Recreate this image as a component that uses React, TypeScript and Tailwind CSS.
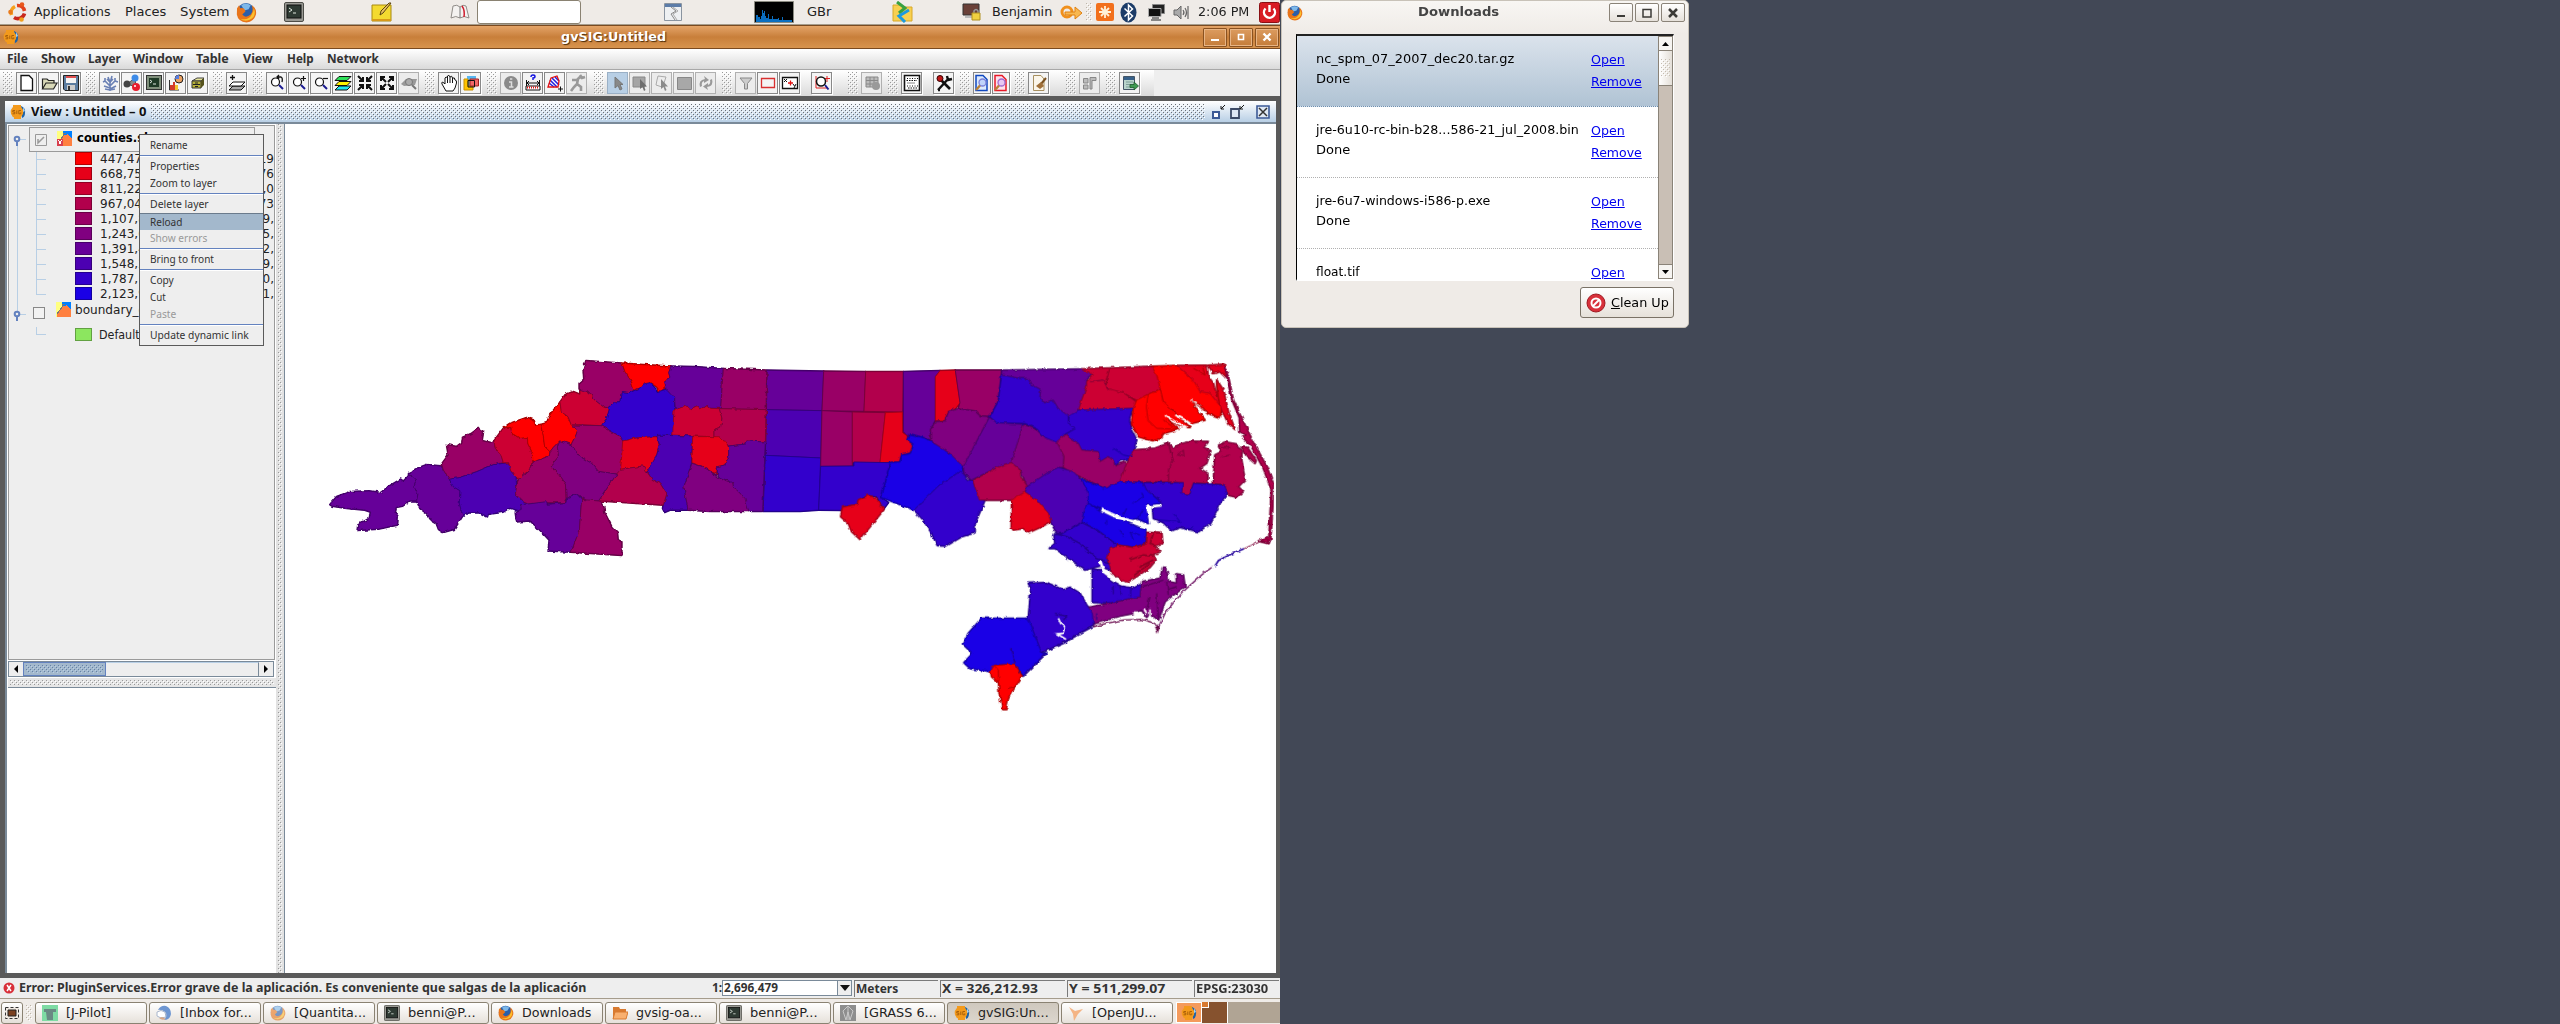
import { ReactNode, useId, useLayoutEffect, useRef, useState } from "react";

/* ---------- helpers ---------- */

/** Single line of text set to an exact advance width. */
function T({ w, className = "", children }: { w: number; className?: string; children: ReactNode }) {
  const ref = useRef<HTMLSpanElement>(null);
  const [k, setK] = useState(1);
  useLayoutEffect(() => {
    if (ref.current && ref.current.offsetWidth) setK(w / ref.current.offsetWidth);
  }, [w]);
  return (
    <span className={"block shrink-0 whitespace-nowrap " + className} style={{ width: w }}>
      <span ref={ref} className="inline-block origin-left" style={{ transform: `scaleX(${k})` }}>
        {children}
      </span>
    </span>
  );
}

function Dots({ a = "#6b6f75", b = "#ffffff", className = "" }: { a?: string; b?: string; className?: string }) {
  const id = useId();
  return (
    <svg className={"block h-full w-full " + className} shapeRendering="crispEdges">
      <pattern id={id} width="4" height="4" patternUnits="userSpaceOnUse">
        <rect width="1" height="1" fill={a} />
        <rect x="2" y="2" width="1" height="1" fill={a} />
        <rect x="1" y="1" width="1" height="1" fill={b} />
        <rect x="3" y="3" width="1" height="1" fill={b} />
      </pattern>
      <rect width="100%" height="100%" fill={`url(#${id})`} />
    </svg>
  );
}

/* ---------- icons ---------- */

const Firefox = ({ s = 20, dim = false }: { s?: number; dim?: boolean }) => (
  <svg width={s} height={s} viewBox="0 0 20 20" className={dim ? "opacity-60" : ""}>
    <circle cx="9.5" cy="9.5" r="8.5" fill="#2b5fa8" />
    <path d="M5 3Q9 0 14 3L12 7L8 8Z" fill="#7db8ea" />
    <path d="M1 6L3 3L4 6Q8 5 9 9L6 12Q9 16 14 12Q17 8 15 3Q20 6 19 12Q17 19 10 19.500Q2 19 .8 12Z" fill="#e8741a" />
    <path d="M17 6Q20 14 13 17Q8 19 4 16Q12 18 15 12Q17 9 17 6Z" fill="#fbc02d" />
  </svg>
);
const Sig = ({ s = 16 }: { s?: number }) => (
  <svg width={s} height={s} viewBox="0 0 16 16">
    <path d="M11 2Q16 4 15 9Q15 13 12 14Z" fill="#1b62a8" />
    <circle cx="7" cy="8" r="6.300" fill="#f39a1c" />
    <path d="M3 1H11V4H3ZM4 13H11V15H4Z" fill="#f39a1c" />
    <path d="M5 6.500H2.800V8H4.800V9.800H2.500M6.800 6.500V10M11 6.500H8.800V9.800H10.800V8.300" fill="none" stroke="#a35a08" strokeWidth=".9" />
    <path d="M13 3L15 7L13 8" fill="#a8d0f0" />
  </svg>
);
const Term = ({ s = 20 }: { s?: number }) => (
  <svg width={s} height={s} viewBox="0 0 20 20">
    <rect x=".5" y=".5" width="19" height="19" rx="1.500" fill="#9a9a94" stroke="#4d4d48" />
    <rect x="3" y="3" width="14" height="13" fill="#2e3a33" stroke="#111" />
    <path d="M5 6L8 8L5 10M9 11H12" stroke="#dfe8df" fill="none" />
  </svg>
);
const LayerIcon = ({ bad = false }: { bad?: boolean }) => (
  <svg width="15" height="15" viewBox="0 0 15 15" shapeRendering="crispEdges">
    <rect width="15" height="15" fill="#ffff80" />
    <path d="M6 0H15V9L11 5L7 4Z" fill="#0080ff" />
    <path d="M1 15V12L6 5L11 3L15 8V15Z" fill="#ff8040" />
    <path d="M1 12L6 5V2L9 2" stroke="#777" fill="none" />
    {bad && <path d="M0 8H6V15H0Z" fill="#d9404f" />}
    {bad && <path d="M1.500 9.500L4.500 13.500M4.500 9.500L1.500 13.500" stroke="#fff" />}
  </svg>
);

const mag = (
  <>
    <circle cx="7.500" cy="8" r="4" fill="#fff" stroke="#111" strokeWidth="1.200" />
    <path d="M11 11L15 15" stroke="#1a1a90" strokeWidth="2" />
  </>
);
const G = "#999";
const toolIcons: Record<string, ReactNode> = {
  new: <path d="M3 1.500H11L14.500 5V16.500H3Z" fill="#fff" stroke="#111" strokeWidth="1.300" />,
  open: <path d="M2.500 15V5H7L8.500 6.500H14V9M2.500 15L6 9H17L13.500 15Z" fill="#d8d8b8" stroke="#222" strokeWidth="1.200" />,
  save: (
    <>
      <path d="M1.500 1.500H16.500V16.500H3L1.500 15Z" fill="#5b7ca0" stroke="#222" />
      <path d="M4 2H14V9H4Z" fill="#f4f4f4" />
      <path d="M4 2H14V4H4Z" fill="#e05050" />
      <path d="M5 11H13V16H5Z" fill="#ccc" />
      <path d="M6 12H8V16H6Z" fill="#333" />
    </>
  ),
  coral: <path d="M9 17V8M9 12L4 7L2 8M4 7V4M9 12L14 7L17 8M14 7V4M9 8L7 3M9 9L11 2M9 14L3 12M9 15L15 12M6 5L9 8L12 5M4 15L9 16L14 15" stroke="#6a80b4" strokeWidth="1.600" fill="none" />,
  balls: (
    <>
      <path d="M4 10L12 4L13 13Z" stroke="#555" fill="#888" />
      <circle cx="4" cy="10" r="3.500" fill="#444" />
      <circle cx="12" cy="4" r="3.500" fill="#3d8be8" />
      <circle cx="13" cy="13" r="4" fill="#e81c2c" />
      <circle cx="12" cy="12" r="1" fill="#fff" />
    </>
  ),
  term: (
    <>
      <rect x="1.500" y="1.500" width="15" height="14" fill="#81907c" stroke="#333" />
      <rect x="4" y="4" width="10" height="9" fill="#1f3a26" />
      <path d="M5 6L7 7.500L5 9M8 10H11" stroke="#dfe8df" fill="none" />
    </>
  ),
  chart: (
    <>
      <circle cx="12" cy="5" r="4" fill="#e8a060" stroke="#222" />
      <path d="M12 5V1A4 4 0 0 0 8 5Z" fill="#5a7fe0" />
      <path d="M2.500 6V16H12" stroke="#333" fill="none" />
      <path d="M3 11H6V16H3ZM6 8H8V16H6Z" fill="#d33a2a" />
      <path d="M8 11H11V16H8Z" fill="#f2c230" />
    </>
  ),
  drawer: (
    <>
      <path d="M3 7L8 4H15L12 7Z" fill="#e6e49a" stroke="#444" />
      <path d="M3 7H12V14H3Z" fill="#b8b23a" stroke="#333" />
      <path d="M12 7L15 4V11L12 14Z" fill="#55521c" />
      <path d="M4 10.500H11" stroke="#222" />
      <path d="M6 9H9M6 12.500H9" stroke="#222" />
    </>
  ),
  addlayer: (
    <>
      <path d="M5 12H17L13 16H1Z" fill="#aaa" stroke="#111" />
      <path d="M5 8H17L13 12H1Z" fill="#fff" stroke="#111" />
      <path d="M2 3.500H7M4.500 1V6" stroke="#111" strokeWidth="1.300" />
    </>
  ),
  zoomback: <>{mag}<path d="M9 3H13Q15 4 14 8M11 1L9 3L11 5" stroke="#111" fill="none" strokeWidth="1.300" /></>,
  zoomin: <>{mag}<path d="M11 4.500H16M13.500 2V7" stroke="#111" strokeWidth="1.200" /></>,
  zoomout: <>{mag}<path d="M11 4.500H16" stroke="#111" strokeWidth="1.200" /></>,
  layers: (
    <>
      <path d="M5 12H17L13 16H1Z" fill="#1ee6f0" stroke="#111" />
      <path d="M5 7.500H17L13 11.500H1Z" fill="#fff200" stroke="#111" />
      <path d="M5 2.500H17L13 6.500H1Z" fill="#2fe05a" stroke="#111" />
    </>
  ),
  shrink: <path d="M2 2L7 7M7 3V7H3M16 2L11 7M11 3V7H15M2 16L7 11M3 11H7V15M16 16L11 11M11 15V11H15" stroke="#111" strokeWidth="2" fill="none" />,
  grow: <path d="M3 3L8 8M3 7V3H7M15 3L10 8M11 3H15V7M3 15L8 10M3 11V15H7M15 15L10 10M15 11V15H11" stroke="#111" strokeWidth="2" fill="none" />,
  zoomgray: (
    <>
      <path d="M1 10L6 5H17L15 11L4 12Z" fill={G} />
      <circle cx="9" cy="8" r="3.500" fill="#aaa" stroke="#777" />
      <path d="M12 11L16 15" stroke="#777" strokeWidth="2" />
    </>
  ),
  hand: (
    <path d="M6 17L2 10Q1 7 4 9L5 10V4Q6 2 7.500 4V2Q9 0 10 3Q12 1 12.500 4Q15 3 15 6Q17 6 16.500 9L15 14L13 17ZM7.500 4V9M10 3V9M12.500 4V9" fill="#fff" stroke="#111" />
  ),
  overlap: (
    <>
      <path d="M5 2H14V12H5Z" fill="#56b6f0" />
      <path d="M2 5V16H11V12L6 12V5Z" fill="#ffc400" stroke="#c89000" />
      <path d="M8 5H16.500V12H8Z" fill="#f06868" stroke="#a02020" />
      <path d="M6 6.500H12.500V13H6Z" fill="none" stroke="#111" />
    </>
  ),
  info: (
    <>
      <circle cx="9" cy="9" r="7" fill="#8a8a8a" />
      <path d="M8 5H10.300M7 8H9.500V13M7 13H11.500" stroke="#ddd" fill="none" strokeWidth="1.500" />
    </>
  ),
  measure: (
    <>
      <path d="M7 3Q7 1 9 1Q11 1 11 2.500Q11 4 9 4V6" stroke="#1010e0" fill="none" strokeWidth="1.400" />
      <path d="M2.500 6V12M15.500 6V12M3 9H15M5 7L3 9L5 11M13 7L15 9L13 11" stroke="#111" fill="none" />
      <path d="M2 12H16V16H2Z" fill="#fff" stroke="#111" />
      <path d="M3 13.500H15" stroke="#e01010" strokeWidth="2" strokeDasharray="1 1" />
    </>
  ),
  area: (
    <>
      <path d="M2 13L5 4L11 2L13 7L12 13Z" fill="#fff" />
      <path d="M3 9L8 13M4 6L11 13M6 4L13 11M9 3L13 7" stroke="#2020e0" strokeWidth="1.600" />
      <path d="M2 13L5 4L11 2L13 7L12 13Z" fill="none" stroke="#e01010" strokeWidth="1.300" />
      <path d="M12 15H17M14.500 12.500V17.500" stroke="#111" />
    </>
  ),
  run: <path d="M12 1L14 4L17 3M13 2L9 6L4 6M10 5L9 10L13 13V17M9 10L6 13L3 17" stroke={G} strokeWidth="2.600" fill="none" />,
  cursor: <path d="M6 3V14L9 11.500L11 16L13 15L11 10.500H14Z" fill="#888" stroke="#777" />,
  rectsel: (
    <>
      <path d="M2 3H14V13H2Z" fill="#a5a5a5" stroke="#888" />
      <path d="M9 5V15L11.500 13L13 17L14.500 16L13 12.500H16Z" fill="#6e6e6e" />
    </>
  ),
  polysel: (
    <>
      <path d="M5 2L13 3L11 9L9 13L3 11L4 6Z" fill="none" stroke="#aaa" />
      <path d="M8 5V15L10.500 13L12 17L13.500 16L12 12.500H15Z" fill="#8a8a8a" />
    </>
  ),
  fillsel: <path d="M2.500 3.500H16.500V15.500H2.500Z" fill="#a8a8a8" stroke="#888" />,
  rotate: <path d="M3 13Q1 6 8 5L7 2L12 6L7 9V7Q4 8 5 12ZM15 5Q17 12 10 13L11 16L6 12.500L11 9V11Q14 10 13 6Z" fill={G} />,
  filter: <path d="M3 4H15L10.500 9.500V15H7.500V9.500Z" fill="#ccc" stroke="#888" />,
  redrect: <path d="M2.500 4.500H15.500V13.500H2.500Z" fill="none" stroke="#d83030" strokeWidth="1.300" />,
  xy: (
    <>
      <path d="M1.500 3.500H16.500V14.500H1.500Z" fill="#fff" stroke="#111" strokeWidth="1.300" />
      <path d="M3 5L6 8M6 5L3 8M12 10L13.500 12M15 10L13 14" stroke="#111" />
      <path d="M7 9H12M9.500 6.500V11.500" stroke="#e01010" strokeWidth="1.300" />
    </>
  ),
  zoomred: (
    <>
      <path d="M3 2V14H14M14 2V8M11 4.500H17" stroke="#e02020" fill="none" />
      <circle cx="8" cy="7.500" r="4.500" fill="#fff" stroke="#111" strokeWidth="1.500" />
      <path d="M12 11L15.500 15.500" stroke="#1a1a90" strokeWidth="2" />
    </>
  ),
  grid: (
    <>
      <path d="M3 3H15V13H3ZM3 6.500H15M3 10H15M7 3V13M11 3V13" fill="#bbb" stroke="#888" />
      <circle cx="13" cy="12" r="4" fill={G} />
    </>
  ),
  noise: (
    <>
      <path d="M1.500 1.500H16.500V16.500H1.500Z" fill="#fff" stroke="#111" strokeWidth="1.600" />
      <g stroke="#111" strokeWidth="1.200">
        <path d="M4 4.500H15M4 12H15" strokeDasharray="1 1.500" />
        <path d="M3.500 6.500H14M5 14H14" strokeDasharray="1.500 1" />
        <path d="M4.500 9H12" strokeDasharray="1 1" />
      </g>
    </>
  ),
  tools: (
    <>
      <path d="M3 16L14 4M3 16L5 16M12 2L13 6L17 5" stroke="#111" strokeWidth="2.400" fill="none" />
      <path d="M6 6L15 15" stroke="#111" strokeWidth="2.600" />
      <circle cx="5" cy="4.500" r="3" fill="#c01818" stroke="#300" />
    </>
  ),
  docblue: (
    <>
      <path d="M3 1.500H10L14 5.500V16.500H3Z" fill="#dceafc" stroke="#1048c0" strokeWidth="1.500" />
      <circle cx="9.500" cy="8.500" r="3.500" fill="#c0d4fa" stroke="#7a80d8" strokeWidth="1.300" />
      <path d="M7 11.500L3 16" stroke="#b88038" strokeWidth="2.300" />
    </>
  ),
  docred: (
    <>
      <path d="M3 1.500H10L14 5.500V16.500H3Z" fill="#fce0ea" stroke="#e81828" strokeWidth="1.500" />
      <circle cx="9.500" cy="8.500" r="3.500" fill="#e6c8f4" stroke="#a06ad0" strokeWidth="1.300" />
      <path d="M7 11.500L3 16" stroke="#b88038" strokeWidth="2.300" />
    </>
  ),
  broom: (
    <>
      <path d="M3.500 1.500H11L14 5V16.500H3.500Z" fill="#fbf6ea" stroke="#a89060" />
      <path d="M16 4L11 10" stroke="#7a5020" strokeWidth="2" />
      <path d="M11 8L14 12L10 15L6 12Z" fill="#a0703a" />
    </>
  ),
  layout: <path d="M2.500 4.500H7V9H2.500ZM2.500 11H7V15H2.500ZM9 3.500H15V6.500H11V15H9Z" fill="#bbb" stroke="#888" />,
  export: (
    <>
      <path d="M2.500 2.500H13.500V15.500H2.500Z" fill="#b9d4cc" stroke="#456" />
      <path d="M3 3H13V6H3Z" fill="#37618a" />
      <path d="M5 8H12M5 10.500H9M5 13H9" stroke="#7f9f98" />
      <path d="M9 10.500H13V8L17.500 12L13 16V13.500H9Z" fill="#3f9a52" stroke="#1d5c2c" strokeWidth=".8" />
    </>
  ),
};

type Btn = { i: string; off?: boolean; on?: boolean; gap?: boolean; narrow?: boolean };
const toolGroups: { w: string; b: Btn[] }[] = [
  { w: "w-[83px]", b: [{ i: "new" }, { i: "open" }, { i: "save" }] },
  { w: "w-[127px]", b: [{ i: "coral" }, { i: "balls" }, { i: "term" }, { i: "chart" }, { i: "drawer" }] },
  { w: "w-[40px]", b: [{ i: "addlayer" }] },
  { w: "w-[172px]", b: [{ i: "zoomback" }, { i: "zoomin" }, { i: "zoomout" }, { i: "layers" }, { i: "shrink" }, { i: "grow" }, { i: "zoomgray", off: true }] },
  { w: "w-[62px]", b: [{ i: "hand" }, { i: "overlap" }] },
  { w: "w-[107px]", b: [{ i: "info", off: true }, { i: "measure" }, { i: "area" }, { i: "run", off: true }] },
  { w: "w-[128px]", b: [{ i: "cursor", on: true }, { i: "rectsel", off: true }, { i: "polysel", off: true }, { i: "fillsel", off: true }, { i: "rotate", off: true }] },
  { w: "w-[126px]", b: [{ i: "filter", off: true }, { i: "redrect" }, { i: "xy" }, { i: "zoomred", gap: true }] },
  { w: "w-[40px]", b: [{ i: "grid", off: true }] },
  { w: "w-[72px]", b: [{ i: "noise" }, { i: "tools", gap: true }] },
  { w: "w-[55px]", b: [{ i: "docblue", narrow: true }, { i: "docred", narrow: true }] },
  { w: "w-[51px]", b: [{ i: "broom" }] },
  { w: "w-[40px]", b: [{ i: "layout", off: true }] },
  { w: "w-[48px]", b: [{ i: "export" }] },
];

/* ---------- map ---------- */

const ramp = ["#ff0000", "#e60019", "#cc0033", "#b2004c", "#990066", "#800080", "#660099", "#4c00b2", "#3300cc", "#1a00e6"];
const edge = ["#a80000", "#9c0018", "#8a0024", "#780036", "#640046", "#540058", "#420068", "#320078", "#22008a", "#12009c"];
type Shape = [number, string];

const west: Shape[] = [
  [6, "60,494 80,470 120,455 180,453 212,458 235,440 272,418 280,424 296,408 310,410 320,420 312,440 324,462 320,482 300,482 278,498 258,502 255,518 264,530 262,555 236,560 205,567 142,571 144,555 178,535 182,516 164,510 110,505 66,498"],
  [6, "296,398 325,384 350,374 392,378 398,385 418,418 430,440 450,452 448,490 458,528 432,568 400,577 386,568 378,548 362,538 350,520 330,505 320,482 324,462 312,440 320,420 310,410 296,408"],
  [4, "395,372 415,345 410,314 440,320 456,308 458,292 485,280 505,266 520,275 516,302 540,308 552,303 556,325 572,342 580,368 550,374 500,395 450,412 418,418 400,390"],
  [7, "418,418 450,412 500,395 550,374 596,368 602,392 618,412 620,440 616,462 640,486 655,492 632,494 634,514 600,504 584,515 534,523 532,530 510,518 470,518 458,528 448,490 450,452 430,440"],
  [2, "552,303 565,285 582,263 602,262 606,280 630,295 652,292 654,312 668,340 668,372 656,392 626,417 618,412 602,392 596,368 580,368 572,342 556,325"],
  [0, "582,263 600,250 650,233 670,240 676,255 692,254 700,290 704,320 720,335 718,348 680,362 668,366 668,340 654,312 652,292 630,295 606,280 602,262"],
  [0, "692,254 712,248 716,230 735,205 750,187 754,215 774,230 784,255 803,270 798,285 783,314 750,302 730,322 720,335 704,320 700,290"],
  [2, "750,187 765,165 790,155 810,163 810,145 840,160 852,178 880,200 898,208 890,235 874,257 815,254 784,255 774,230 754,215"],
  [4, "828,62 880,66 936,70 945,95 962,120 972,150 960,158 934,155 930,185 914,186 894,203 880,200 852,178 840,160 808,147 808,130 822,118 820,90"],
  [0, "936,70 1000,74 1083,79 1076,98 1080,112 1064,122 1068,140 1050,155 1040,140 1020,128 1010,135 1000,132 990,144 972,150 962,120 945,95"],
  [8, "934,155 960,158 990,144 1000,132 1020,128 1045,155 1068,148 1090,165 1094,175 1094,212 1090,285 1040,286 1040,290 985,293 938,303 928,288 905,275 874,257 890,235 898,208 894,203 914,186 930,185"],
  [6, "1083,79 1155,80 1240,86 1232,205 1202,205 1190,195 1170,208 1160,198 1140,208 1128,198 1096,210 1094,175 1068,148 1064,122 1080,112 1076,98"],
  [4, "1240,86 1370,91 1368,209 1232,206"],
  [2, "1092,210 1128,198 1140,208 1160,198 1170,208 1190,195 1202,205 1228,206 1236,235 1232,262 1212,270 1212,290 1150,288 1088,285"],
  [3, "1228,206 1368,209 1366,306 1310,303 1308,312 1256,318 1240,300 1212,290 1212,270 1232,262 1236,235"],
  [4, "784,255 874,257 905,275 928,288 938,303 938,330 932,392 920,402 865,394 845,370 810,350 783,314 798,285 803,270"],
  [1, "938,303 985,293 1044,290 1048,312 1038,350 1020,392 1008,394 1000,378 932,388"],
  [7, "1040,286 1148,288 1144,370 1122,440 1134,510 1080,510 1064,517 1058,505 1060,495 1070,462 1050,430 1026,418 1012,396 1038,350 1048,312"],
  [1, "1148,290 1228,290 1240,300 1256,325 1256,350 1244,375 1222,380 1220,402 1196,390 1172,378 1146,368"],
  [6, "1256,318 1308,312 1310,303 1366,306 1364,346 1358,514 1316,514 1300,470 1270,440 1268,428 1230,412 1222,404 1222,380 1244,375 1256,350"],
  [5, "1146,370 1172,378 1196,390 1222,412 1268,428 1270,440 1305,475 1316,514 1200,514 1134,510 1122,440"],
  [3, "932,388 1000,378 1010,394 1026,418 1050,430 1070,462 1060,495 866,482 920,402"],
  [5, "750,302 783,314 810,350 845,370 865,394 920,402 866,482 832,482 800,462 768,475 766,430 745,400 722,378 745,350 742,320"],
  [4, "730,322 750,302 742,320 745,350 722,378 745,400 766,430 768,475 762,488 710,488 655,492 640,486 616,462 620,440 626,417 656,392 668,372 680,362 718,348 720,335"],
  [6, "655,492 710,485 712,493 768,488 770,475 800,462 815,478 808,570 784,636 715,632 718,600 680,560 660,542 620,545 616,516 634,508 632,494"],
  [4, "815,478 876,484 885,520 905,560 922,578 924,600 935,606 935,646 784,636 808,570"],
];
const middle: Shape[] = [
  [6, "-40,91 131,94 126,212 -42,209"],
  [7, "-42,209 126,212 122,354 -44,346"],
  [8, "-44,346 122,354 116,510 60,514 -52,514"],
  [4, "131,94 257,95 252,214 126,212"],
  [3, "257,95 370,95 368,216 252,214"],
  [6, "370,95 480,92 466,110 466,240 452,270 452,300 400,285 382,288 370,275"],
  [1, "480,92 526,91 540,188 522,212 506,215 495,243 466,243 466,110"],
  [4, "526,91 665,91 655,185 630,230 600,228 585,214 535,206 540,188"],
  [4, "126,212 217,216 217,378 122,379"],
  [3, "217,216 316,218 300,368 217,367"],
  [1, "316,218 367,216 368,278 385,290 384,300 400,312 392,340 365,346 358,366 300,368"],
  [8, "122,379 222,378 222,366 332,368 305,470 308,475 325,488 310,508 290,470 265,467 235,480 232,494 188,500 185,511 116,510"],
];
const east: Shape[] = [
  [9, "392,283 435,295 480,320 520,350 548,378 546,390 475,438 402,510 305,472 332,368 360,366 365,346 392,340 400,312 384,300"],
  [1, "188,502 232,494 235,480 262,467 285,472 312,508 290,535 240,598 215,575 205,550 182,530"],
  [8, "402,510 475,438 546,390 560,418 578,424 600,478 614,482 585,550 585,578 545,590 498,618 472,616 455,580 430,540"],
  [5, "466,245 495,243 506,215 535,206 585,214 600,228 628,230 550,380 510,340 460,308 452,300 452,270"],
  [6, "628,232 650,248 730,253 694,368 664,376 574,420 552,400 550,380"],
  [5, "730,253 770,270 790,290 815,296 830,305 852,348 850,382 835,382 800,400 742,440 722,390 694,368"],
  [3, "578,422 664,376 694,368 718,388 722,408 742,440 735,456 700,480 598,480"],
  [8, "665,105 720,115 745,115 752,132 782,148 780,170 790,188 820,180 835,205 865,225 865,250 888,265 855,282 830,307 790,290 770,265 735,250 650,248 630,230 655,185"],
  [6, "665,91 905,87 940,100 920,115 920,140 905,180 896,210 880,228 865,228 835,205 820,180 790,188 780,170 782,148 752,132 745,115 720,115 665,105"],
  [2, "905,87 990,84 978,120 980,140 1030,158 1068,185 1065,205 896,210 905,180 920,140 920,125 940,105"],
  [2, "990,84 1120,79 1135,110 1142,150 1100,165 1072,182 1030,158 980,145 980,120"],
  [8, "896,210 1056,205 1048,240 1055,270 1070,300 1060,330 1050,355 1020,362 1005,378 1000,362 985,350 960,365 955,335 905,330 895,310 855,284 888,265 865,250 868,228"],
  [4, "855,284 895,310 905,330 955,335 960,365 985,350 1000,362 1005,378 1035,365 1040,370 1020,425 975,445 920,418 880,400 850,382 852,348 830,305"],
  [7, "835,382 880,395 905,420 925,460 925,490 910,520 905,550 880,560 850,582 830,580 812,545 805,520 770,480 735,456 742,440 800,400"],
  [1, "735,456 770,480 805,520 812,545 780,562 745,578 730,565 700,570 694,560 695,480"],
  [0, "1105,162 1142,150 1150,185 1195,230 1230,262 1200,256 1155,225 1170,250 1195,268 1150,280 1145,295 1115,302 1075,290 1055,250 1060,205 1070,180"],
  [0, "1105,162 1142,150 1150,185 1195,230 1230,262 1200,256 1160,235 1195,268 1130,265 1104,240 1099,200"],
  [0, "1115,79 1190,77 1240,120 1290,160 1325,200 1320,232 1285,220 1262,195 1235,180 1250,210 1275,240 1235,250 1195,230 1150,185 1142,150 1130,105"],
  [1, "1190,77 1280,76 1285,110 1300,130 1305,150 1322,200 1290,160 1260,155 1240,120"],
  [1, "1285,76 1333,73 1338,110 1322,95 1300,100"],
  [1, "1310,120 1330,150 1345,215 1365,268 1345,250 1325,210 1312,165"],
  [3, "1333,78 1345,110 1360,180 1378,220 1402,270 1425,315 1460,380 1480,430 1478,500 1472,595 1467,610 1435,603 1467,590 1474,450 1450,385 1412,315 1388,292 1400,285 1380,275 1378,232 1356,180"],
  [3, "1060,330 1125,325 1165,310 1172,340 1180,360 1166,390 1166,425 1020,425 1040,370"],
  [3, "1165,310 1180,325 1200,312 1235,304 1285,305 1270,322 1292,332 1280,370 1258,385 1283,400 1283,430 1240,428 1230,463 1203,460 1208,428 1166,425 1166,390 1180,360"],
  [3, "1316,316 1335,306 1370,312 1385,335 1385,360 1395,420 1375,440 1390,455 1370,472 1345,465 1330,433 1300,430 1305,345 1325,335"],
  [3, "1385,322 1402,322 1428,362 1425,370 1400,348"],
  [9, "905,418 975,445 1020,425 1090,428 1100,450 1145,490 1100,495 1105,550 1070,535 1040,540 1010,525 965,508 925,490 925,460"],
  [8, "1090,428 1208,428 1205,460 1230,463 1240,430 1335,435 1342,460 1320,490 1312,510 1290,550 1255,575 1200,562 1175,572 1150,548 1120,535 1118,505 1145,498 1145,485 1100,450"],
  [9, "925,490 965,515 1010,535 1060,555 1100,570 1098,610 1065,622 1010,615 950,570 905,548 910,520"],
];
const south: Shape[] = [
  [8, "425,162 485,128 530,150 590,195 570,205 562,240 575,272 540,258 495,270 405,205 388,205 405,190 402,165"],
  [2, "590,195 640,203 680,192 682,157 725,160 728,190 700,200 722,215 700,222 708,240 690,262 650,290 620,308 575,280 562,235 570,205"],
  [8, "517,268 545,270 570,300 600,318 640,325 665,312 660,350 570,368 517,367"],
  [5, "505,382 570,370 660,350 665,305 720,295 728,265 740,265 745,305 770,310 768,282 790,285 795,320 760,345 735,365 715,420 690,400 680,412 665,390 640,400 600,408 520,432 515,400"],
  [8, "325,310 380,308 430,330 450,322 480,340 500,375 517,400 520,438 480,460 430,490 365,518 325,415 333,325"],
  [9, "185,415 325,415 345,470 365,518 380,520 345,550 310,588 285,552 225,555 215,575 150,565 132,548 158,520 128,492 145,460"],
  [0, "222,556 285,552 306,588 285,620 265,655 258,688 248,688 238,640 236,608 215,590 212,574"],
];

const Counties = ({ data }: { data: Shape[] }) => (
  <>
    {data.map(([c, p], i) => (
      <polygon key={"u" + i} points={p} fill={edge[c]} stroke={edge[c]} strokeWidth="6" strokeLinejoin="round" />
    ))}
    {data.map(([c, p], i) => (
      <polygon key={i} points={p} fill={ramp[c]} stroke={edge[c]} strokeWidth="2.500" strokeLinejoin="round" />
    ))}
  </>
);

function MapView() {
  return (
    <svg className="block h-full w-full" viewBox="285 124 989 849" preserveAspectRatio="none">
      <defs>
        <filter id="coast" x="-5%" y="-5%" width="110%" height="110%" colorInterpolationFilters="sRGB">
          <feTurbulence type="fractalNoise" baseFrequency="0.2" numOctaves="2" seed="4" result="n" />
          <feDisplacementMap in="SourceGraphic" in2="n" scale="3.5" xChannelSelector="R" yChannelSelector="G" />
        </filter>
      </defs>
      <g transform="translate(780 340) scale(.33333)">
        <Counties data={middle} />
      </g>
      <g filter="url(#coast)">
        <g transform="translate(310 340) scale(.33333)">
          <Counties data={west} />
        </g>
        <g transform="translate(780 340) scale(.33333)">
          <Counties data={east} />
          <path d="M965 509L1010 530L1060 546L1100 561L1150 575" fill="none" stroke="#fff" strokeWidth="10" />
          <path d="M1145 496L1103 500L1112 550" fill="none" stroke="#fff" strokeWidth="8" />
          <path d="M1232 180L1248 190L1262 210L1285 230M1155 226L1185 245L1220 262M1186 225L1215 240L1235 254" fill="none" stroke="#fff" strokeWidth="6" />
          <g fill="none" stroke="#a80000" strokeWidth="3">
            <path d="M1195 225L1170 205M1275 215L1235 182M1180 262L1150 240M1240 85L1275 105L1268 82M1310 130L1318 195" />
            <g stroke="#780036">
              <path d="M1195 345L1210 330L1212 350ZM1325 320H1350L1340 330M1350 345L1325 350M930 125L970 120L985 150" />
            </g>
            <g stroke="#12009c">
              <path d="M980 555V540M1030 590L1020 570M1060 600L1050 575L1080 585M1000 325L1030 345L1055 350M1030 525L1040 505M1075 535L1090 510M1135 540L1200 545L1180 520M1215 570L1240 560M1060 490L1090 470L1085 455" />
            </g>
          </g>
        </g>
        <g transform="translate(920 480) scale(.33333)">
          <Counties data={south} />
          <path d="M540 244L552 275L585 300L620 314L660 300" fill="none" stroke="#fff" strokeWidth="9" />
          <path d="M415 415L422 430L436 440L428 460L412 462L425 470L438 478" fill="none" stroke="#fff" strokeWidth="5" />
          <path d="M640 400H655M672 385L680 405M690 388V410" fill="none" stroke="#fff" strokeWidth="5" />
          <path d="M402 160L440 170L480 190L530 235L570 250M405 400L440 410L430 420M365 518L430 488L480 458L520 438M310 588L345 555L375 522M272 505L285 550" fill="none" stroke="#22008a" strokeWidth="4" />
          <path d="M580 318V340M600 318L605 345M632 325V350M530 420V400" fill="none" stroke="#22008a" strokeWidth="3" />
          <path d="M630 240L670 225L700 228M655 262L700 240M700 160L690 190L720 205M640 288L690 250" fill="none" stroke="#8a0024" strokeWidth="5" />
          <path d="M665 320L700 310L730 300M690 350L680 390M710 340L715 415M740 330L770 320M745 345L740 305" fill="none" stroke="#540058" strokeWidth="4" />
          <path d="M222 556L235 570L236 608M285 620L262 625" fill="none" stroke="#a80000" strokeWidth="3" />
          <path d="M520 440L560 430L610 420L665 418L700 428L718 440" fill="none" stroke="#640046" strokeWidth="4" />
          <path d="M705 440H720L713 462Z" fill="#640046" />
          <path d="M716 440L735 400L760 368L800 325L845 285L875 262" fill="none" stroke="#640058" strokeWidth="4" />
          <path d="M885 258L895 242L930 224L972 206" fill="none" stroke="#22009a" strokeWidth="5" />
          <path d="M972 206L1015 186L1045 178L1046 192L1020 184" fill="#b2004c" stroke="#780036" strokeWidth="3" />
        </g>
      </g>
    </svg>
  );
}

/* ---------- tree panel ---------- */

const legend: [string, string, string, string][] = [
  ["bg-[#ff0000]", "border-[#b20000]", "447,471", ".19"],
  ["bg-[#e60019]", "border-[#a00012]", "668,752", "76"],
  ["bg-[#cc0033]", "border-[#8f0024]", "811,222", "0,0"],
  ["bg-[#b2004c]", "border-[#7c0035]", "967,044", "73"],
  ["bg-[#990066]", "border-[#6b0047]", "1,107,8", "9,"],
  ["bg-[#800080]", "border-[#590059]", "1,243,0", "5,"],
  ["bg-[#660099]", "border-[#47006b]", "1,391,4", "2,"],
  ["bg-[#4c00b2]", "border-[#35007c]", "1,548,2", "9,"],
  ["bg-[#3300cc]", "border-[#24008f]", "1,787,1", "0,"],
  ["bg-[#1a00e6]", "border-[#1200a0]", "2,123,9", "1,"],
];

const menu: (null | { t: string; w: number; off?: boolean; on?: boolean })[] = [
  { t: "Rename", w: 38 },
  null,
  { t: "Properties", w: 49 },
  { t: "Zoom to layer", w: 67 },
  null,
  { t: "Delete layer", w: 59 },
  { t: "Reload", w: 32, on: true },
  { t: "Show errors", w: 57, off: true },
  null,
  { t: "Bring to front", w: 64 },
  null,
  { t: "Copy", w: 24 },
  { t: "Cut", w: 16 },
  { t: "Paste", w: 26, off: true },
  null,
  { t: "Update dynamic link", w: 99 },
];

function ContextMenu() {
  return (
    <div className="absolute left-[131px] top-[9px] z-10 h-[212px] w-[125px] border border-[#5a5a5a] bg-[#eeeeee] pt-[2px] font-['Noto_Sans'] text-[11px] text-[#333]">
      {menu.map((m, i) =>
        m ? (
          <div key={i} className={"flex h-[17px] items-center pl-[10px] " + (m.on ? "border-t border-[#6b7b8c] bg-[#a3b8cc]" : m.off ? "text-[#999]" : "")}>
            <T w={m.w}>{m.t}</T>
          </div>
        ) : (
          <div key={i} className="h-[4px] pt-px">
            <div className="h-[2px] border-b border-white bg-[#6382bf]" />
          </div>
        ),
      )}
    </div>
  );
}

function Tree() {
  return (
    <div className="relative h-[535px] w-[267px] border border-[#9a9a9a] bg-[#eeeeee] font-['DejaVu_Sans'] text-[13px] text-[#222]">
      <svg className="absolute left-0 top-0" width="46" height="230" viewBox="9 126 46 230" fill="none" stroke="#b8cfe5" shapeRendering="crispEdges">
        <path d="M17.500 146V312M19 139.500H26M19 314.500H26M36.500 152V294.500M36.500 327V334.500H46" />
        {legend.map((_, i) => (
          <path key={i} d={`M36 ${159.5 + 15 * i}H46`} />
        ))}
        <g stroke="#6382bf" strokeWidth="2" shapeRendering="auto">
          <circle cx="17" cy="139" r="2.300" />
          <path d="M17 141V146" />
          <circle cx="17" cy="314" r="2.300" />
          <path d="M17 316V321" />
        </g>
      </svg>
      <div className="relative ml-[20px] mt-px flex h-[25px] w-[226px] items-center border border-[#9a9a9a] pl-[5px]">
        <svg width="12" height="12" viewBox="0 0 12 12">
          <path d="M.500 .500H11.500V11.500H.500Z" fill="none" stroke="#999" />
          <path d="M3 5V9L9 3" fill="none" stroke="#999" strokeWidth="1.500" />
        </svg>
        <div className="ml-[10px] -mt-[3px]"><LayerIcon bad /></div>
        <T w={84} className="ml-[5px] -mt-[4px] font-bold text-black">counties.shp</T>
      </div>
      {legend.map(([bg, bd, a, b], i) => (
        <div key={i} className="relative ml-[66px] flex h-[15px] w-[199px] items-center justify-between overflow-hidden text-[12px]">
          <div className="flex items-center">
            <div className={`-mt-[2px] h-[13px] w-[17px] border ${bg} ${bd}`} />
            <span className="ml-[8px] leading-[15px]">{a}</span>
          </div>
          <span className="leading-[15px]">{b}</span>
        </div>
      ))}
      <div className="relative ml-[24px] flex h-[18px] items-center">
        <div className="mt-[4px] h-[12px] w-[12px] border border-[#888] bg-[#f2f2f2]" />
        <div className="ml-[11px] -mt-[4px]"><LayerIcon /></div>
        <T w={105} className="ml-[4px] -mt-[2px]">boundary_county</T>
      </div>
      <div className="relative ml-[66px] mt-[5px] flex h-[20px] items-center">
        <div className="-mt-[2px] h-[13px] w-[17px] border border-[#62a142] bg-[#8ce65f]" />
        <T w={41} className="ml-[7px]">Default</T>
      </div>
    </div>
  );
}

/* ---------- gvSIG window ---------- */

const topMenu: [string, number, string][] = [
  ["File", 21, "w-[34px]"],
  ["Show", 34, "w-[47px]"],
  ["Layer", 33, "w-[45px]"],
  ["Window", 50, "w-[63px]"],
  ["Table", 33, "w-[47px]"],
  ["View", 30, "w-[44px]"],
  ["Help", 27, "w-[40px]"],
  ["Network", 52, "w-[60px]"],
];

const WinBtn = ({ children, light = false }: { children: ReactNode; light?: boolean }) => (
  <div className={"flex h-[19px] w-[24px] items-center justify-center border " + (light ? "rounded-[2px] border-[#8a8378] bg-linear-to-b from-white to-[#e6e1da]" : "rounded-[1px] border-[#8a5220] bg-linear-to-b from-[#dc9c60] to-[#c47c38] shadow-[inset_0_0_0_1px_#e8b484]")}>
    <svg width="12" height="12" viewBox="0 0 12 12" fill="none" stroke={light ? "#3c3b37" : "#fff"} strokeWidth="2">
      {children}
    </svg>
  </div>
);

function TopPanel() {
  return (
    <div className="flex h-[25px] items-center overflow-hidden border-b border-[#a59c8c] bg-[#efebe7] pl-[8px] font-['DejaVu_Sans'] text-[13px] text-[#222]">
      <div className="w-[26px]">
        <svg width="20" height="20" viewBox="0 0 20 20" fill="none" strokeWidth="3.600">
          <path d="M3.500 13A7 7 0 0 1 7 4.500" stroke="#f6a21c" />
          <path d="M9 3.500A7 7 0 0 1 16.500 9" stroke="#e2421c" />
          <path d="M16.500 11.500A7 7 0 0 1 6 15.500" stroke="#c8281c" />
          <g stroke="none">
            <circle cx="2.500" cy="10" r="2.300" fill="#e87a1c" />
            <circle cx="14" cy="2.500" r="2.300" fill="#e8581c" />
            <circle cx="13.500" cy="17.500" r="2.300" fill="#f0a01c" />
          </g>
        </svg>
      </div>
      <div className="w-[91px]"><T w={76}>Applications</T></div>
      <div className="w-[55px]"><T w={41}>Places</T></div>
      <div className="w-[56px]"><T w={49}>System</T></div>
      <div className="w-[48px]"><Firefox s={21} /></div>
      <div className="w-[87px]"><Term /></div>
      <div className="w-[79px]">
        <svg width="22" height="20" viewBox="0 0 22 20">
          <path d="M1 3H20V19H1Z" fill="#f4da30" stroke="#a88a10" />
          <path d="M1 17H20V19H1Z" fill="#d89a18" />
          <path d="M20 1L12 11L9 13L10 9L18 1Z" fill="#e8c060" stroke="#5a4410" />
        </svg>
      </div>
      <div className="w-[27px]">
        <svg width="20" height="16" viewBox="0 0 20 16">
          <path d="M1 14L3 2Q7 0 10 3Q13 0 16 2L19 14Q14 11 10 14Q6 11 1 14Z" fill="#f4f2f0" stroke="#908c88" />
          <path d="M10 3V14" stroke="#777" />
          <path d="M12 2Q15 6 14 13" stroke="#d02030" fill="none" strokeWidth="1.500" />
        </svg>
      </div>
      <div className="w-[187px]"><div className="h-[24px] w-[104px] rounded-[3px] border border-[#8a8272] bg-white" /></div>
      <div className="w-[90px]">
        <svg width="18" height="18" viewBox="0 0 18 18">
          <path d="M.500 .500H17.500V17.500H.500Z" fill="#eef0f2" stroke="#8a94a0" />
          <path d="M1 1H17V4H1Z" fill="#5c7ca8" />
          <path d="M7 4L12 8L7 11L11 17" stroke="#888" fill="none" />
          <path d="M9 4L14 8L9 11L13 17" stroke="#aaa" fill="none" />
        </svg>
      </div>
      <div className="w-[53px]">
        <svg width="40" height="22" viewBox="0 0 40 22">
          <path d="M.500 .500H39.500V21.500H.500Z" fill="#000" stroke="#8a8a80" />
          <path d="M2 21V14H4V16H6V18H7V15H8V9H9V12H10V10H11V15H12V17H14V13H15V18H18V15H19V18H24V17H25V19H28V16H29V19H38V21Z" fill="#0a6ec0" />
        </svg>
      </div>
      <div className="w-[84px]"><T w={24}>GBr</T></div>
      <div className="w-[71px]">
        <svg width="22" height="22" viewBox="0 0 22 22">
          <path d="M2 4H9L11 6H21V20H2Z" fill="#f8d050" stroke="#d8a828" />
          <path d="M6 1L14 7L8 12" stroke="#38a040" strokeWidth="3" fill="none" />
          <path d="M18 9L8 15L14 21" stroke="#1c9ae0" strokeWidth="3" fill="none" />
        </svg>
      </div>
      <div className="w-[30px]">
        <svg width="20" height="20" viewBox="0 0 20 20">
          <path d="M1 2H17V13H1Z" fill="#6a4038" stroke="#333" />
          <path d="M3 14H13V16H3Z" fill="#bbb" />
          <path d="M12 12V9Q14 6 16 9V12" stroke="#999" strokeWidth="1.500" fill="none" />
          <path d="M10 11H18V18H10Z" fill="#f0d040" stroke="#b09020" />
        </svg>
      </div>
      <div className="w-[68px]"><T w={60}>Benjamin</T></div>
      <div className="w-[26px]">
        <svg width="23" height="16" viewBox="0 0 23 16">
          <circle cx="7" cy="8" r="5" fill="none" stroke="#f0901c" strokeWidth="3" />
          <path d="M5 8H15V3L22 9L15 15V11H5Z" fill="#f8b850" stroke="#e08010" />
        </svg>
      </div>
      <div className="h-[18px] w-[10px] pr-[4px]"><Dots a="#bdb5a8" /></div>
      <div className="w-[24px]">
        <svg width="18" height="18" viewBox="0 0 18 18">
          <rect width="18" height="18" rx="2" fill="#f2701c" />
          <path d="M9 3V15M3 9H15M5 5L13 13M13 5L5 13" stroke="#fff2d8" strokeWidth="1.800" />
        </svg>
      </div>
      <div className="w-[28px]">
        <svg width="17" height="21" viewBox="0 0 17 21">
          <ellipse cx="8.500" cy="10.500" rx="8" ry="10" fill="#1c3c68" />
          <path d="M4.500 6.500L12.500 14L8.500 18V3L12.500 7L4.500 14.500" stroke="#fff" strokeWidth="1.500" fill="none" />
        </svg>
      </div>
      <div className="w-[25px]">
        <svg width="17" height="17" viewBox="0 0 17 17">
          <path d="M4.500 .500H16.500V9.500H4.500Z" fill="#222" stroke="#888" />
          <path d="M.500 4.500H13V12.500H.500Z" fill="#111" stroke="#aaa" />
          <path d="M4 14H11M3 16H13" stroke="#666" strokeWidth="1.500" />
        </svg>
      </div>
      <div className="w-[25px]">
        <svg width="17" height="17" viewBox="0 0 17 17" fill="none" stroke="#666">
          <path d="M1 6H4L8 2V15L4 11H1Z" fill="#aaa" />
          <path d="M10 6Q12 8.500 10 11M12 4Q15 8.500 12 13M15 2V15" strokeWidth="1.200" />
        </svg>
      </div>
      <div className="w-[61px]"><T w={51}>2:06 PM</T></div>
      <svg width="21" height="21" viewBox="0 0 21 21" className="shrink-0">
        <rect x=".500" y=".500" width="20" height="20" rx="2" fill="#d81c24" stroke="#8a1014" />
        <path d="M6.500 6.500A5.500 5.500 0 1 0 14.500 6.500M10.500 3V10" stroke="#fff" strokeWidth="2.400" fill="none" />
      </svg>
    </div>
  );
}

const tasks: { t: string; w: number; icon: ReactNode; on?: boolean }[] = [
  { t: "[J-Pilot]", w: 45, icon: <svg width="16" height="16"><rect width="16" height="16" fill="#7edba4" /><path d="M2 4H14V7H2ZM4 7H11V15H5Z" fill="#6a8a84" /></svg> },
  { t: "[Inbox for...", w: 72, icon: <svg width="16" height="16" viewBox="0 0 16 16"><path d="M2 5Q5 0 10 1Q15 3 15 9Q14 15 8 15Q11 12 10 8Q6 4 2 5Z" fill="#6f97d2" /><path d="M1 7Q5 4 9 7L10 12L5 13L1 11Z" fill="#fff" stroke="#a9b6cc" /><path d="M3 13Q6 16 10 14L6 12Z" fill="#d8a888" /></svg> },
  { t: "[Quantita...", w: 72, icon: <Firefox s={16} dim /> },
  { t: "benni@P...", w: 68, icon: <Term s={16} /> },
  { t: "Downloads", w: 69, icon: <Firefox s={16} /> },
  { t: "gvsig-oa...", w: 66, icon: <svg width="16" height="16" viewBox="0 0 16 16"><path d="M1 2H7L8 4H14V14H1Z" fill="#d87a30" /><path d="M3 7H16L14 14H1Z" fill="#f8b070" stroke="#d87a30" /></svg> },
  { t: "benni@P...", w: 68, icon: <Term s={16} /> },
  { t: "[GRASS 6...", w: 73, icon: <svg width="16" height="16" viewBox="0 0 16 16"><rect width="16" height="16" fill="#8e8e8e" /><path d="M8 1L3 6L6 15L8 7L10 15L13 6ZM8 1V15" stroke="#c8c8c8" fill="none" /></svg> },
  { t: "gvSIG:Un...", w: 71, icon: <Sig />, on: true },
  { t: "[OpenJU...", w: 65, icon: <svg width="16" height="16" viewBox="0 0 16 16"><path d="M1 2L7 6L15 4L10 9L6 16L5 9Z" fill="#f4b484" /></svg> },
];

function Taskbar() {
  return (
    <div className="flex h-[26px] items-center border-t border-[#a59c8c] bg-[#efebe7] pl-px pt-[2px] font-['DejaVu_Sans'] text-[13px] text-[#222]">
      <div className="flex h-[22px] w-[22px] items-center justify-center rounded-[3px] border border-[#8a8272] bg-linear-to-b from-white to-[#e4dfd8]">
        <svg width="14" height="12" viewBox="0 0 14 12"><path d="M.500 .500H13.500V11.500H.500Z" fill="#f0e8e0" stroke="#333" strokeDasharray="3 2" /><path d="M3 3H11V9H3Z" fill="#7a4020" stroke="#222" /></svg>
      </div>
      <div className="mx-[3px] h-[16px] w-[6px]"><Dots a="#bdb5a8" /></div>
      <div className="flex gap-[2px]">
        {tasks.map((t, i) => (
          <div key={i} className={"flex h-[22px] w-[112px] items-center rounded-[3px] border border-[#8a8272] pl-[6px] " + (t.on ? "bg-linear-to-b from-[#cfc8be] to-[#dcd6cd]" : "bg-linear-to-b from-white to-[#e6e1da]")}>
            <div className="w-[24px]">{t.icon}</div>
            <T w={t.w}>{t.t}</T>
          </div>
        ))}
      </div>
      <div className="ml-[3px] flex h-[21px] flex-1 bg-[#b0a494]">
        <div className="flex w-[26px] items-center justify-center border border-white bg-[#f49a5c]"><Sig /></div>
        <div className="w-[26px] border-r border-white bg-[#86522e]"><div className="h-[6px] w-[7px] border-b border-r border-white bg-[#d87a30]" /></div>
      </div>
    </div>
  );
}

const Cell = ({ w, tw, children }: { w: string; tw: number; children: ReactNode }) => (
  <div className={"h-[17px] border-l border-t border-[#7a7a7a] pl-[1px] leading-[16px] " + w}>
    <T w={tw}>{children}</T>
  </div>
);

function StatusBar() {
  return (
    <div className="flex h-[20px] items-center bg-[#eeeeee] pl-[3px] font-['Noto_Sans'] text-[12px] font-bold text-[#333]">
      <svg width="12" height="12" viewBox="0 0 12 12"><circle cx="6" cy="6" r="5.500" fill="#d8303a" /><path d="M4 3L8 9M8 3L4 9" stroke="#fff" strokeWidth="1.500" /></svg>
      <T w={567} className="ml-[4px]">Error: PluginServices.Error grave de la aplicación. Es conveniente que salgas de la aplicación</T>
      <T w={10} className="ml-[126px]">1:</T>
      <div className="flex h-[16px] w-[130px] border border-[#7a8a99] bg-white">
        <T w={54} className="pl-[1px] leading-[14px]">2,696,479</T>
        <div className="ml-auto flex w-[14px] items-center justify-center border-l border-[#7a8a99] bg-[#eeeeee]">
          <svg width="10" height="6"><path d="M0 0H10L5 6Z" fill="#111" /></svg>
        </div>
      </div>
      <div className="ml-[2px] flex gap-[2px]">
        <Cell w="w-[84px]" tw={42}>Meters</Cell>
        <Cell w="w-[125px]" tw={96}>X = 326,212.93</Cell>
        <Cell w="w-[125px]" tw={96}>Y = 511,299.07</Cell>
        <Cell w="w-[85px]" tw={72}>EPSG:23030</Cell>
      </div>
    </div>
  );
}

function ViewFrame() {
  return (
    <div className="flex h-[882px] bg-[#5a5a5a] p-[5px] pr-[4px]">
      <div className="flex w-[1271px] flex-col">
        <div className="flex h-[23px] items-center border-b-2 border-[#7a8a99] bg-linear-to-b from-white to-[#b8cfe5] pl-[5px]">
          <Sig />
          <T w={115} className="ml-[5px] font-['Noto_Sans'] text-[13px] font-bold text-[#111]">View : Untitled – 0</T>
          <div className="ml-[5px] mt-[1px] h-[16px] w-[1054px]"><Dots /></div>
          <svg width="60" height="18" viewBox="0 0 60 18" className="ml-[6px]" fill="none">
            <path d="M2 9H8V15H2Z" stroke="#3c5a96" strokeWidth="2" fill="#fff" />
            <path d="M14 2L10 6M10 3V6H13" stroke="#111" />
            <path d="M20 6H28V15H20Z" stroke="#3c4a66" strokeWidth="1.800" fill="#dfe8f4" />
            <path d="M33 2L29 6M29 3V6H32" stroke="#111" />
            <path d="M46 3H58V15H46Z" stroke="#3c5a96" strokeWidth="1.600" fill="#dfe8f4" />
            <path d="M48 5L56 13M56 5L48 13" stroke="#333" strokeWidth="1.500" />
          </svg>
        </div>
        <div className="flex flex-1 border-l-2 border-[#7a8a99]">
          <div className="relative flex w-[269px] flex-col bg-white pl-px pt-px">
            <div className="relative"><Tree /><ContextMenu /></div>
            <div className="mt-[1px] flex h-[16px] w-[266px] border border-[#7a8a99] bg-[#eeeeee]">
              <svg width="14" height="14"><path d="M9 3V11L5 7Z" fill="#000" /></svg>
              <div className="w-[83px] border border-[#6382bf] bg-[#a3b8cc] p-[2px]"><Dots a="#6382a8" b="#b8cfe5" /></div>
              <div className="flex-1 border-r border-t border-[#7a8a99] border-t-[#b8cfe5]" />
              <svg width="14" height="14"><path d="M5 3V11L9 7Z" fill="#000" /></svg>
            </div>
            <div className="mt-px h-[10px] w-[268px] border-b border-[#7a8a99] bg-[#e6e6e6] px-[2px] py-[2px]"><Dots a="#999" /></div>
            <div className="flex-1 bg-white" />
          </div>
          <div className="w-[9px] border-r border-[#7a8a99] bg-[#e2e2e2] px-[2px]"><Dots a="#999" /></div>
          <div className="h-[849px] w-[991px] bg-white pr-[2px]"><MapView /></div>
        </div>
      </div>
    </div>
  );
}

/* ---------- downloads window ---------- */

const files: [string, number][] = [
  ["nc_spm_07_2007_dec20.tar.gz", 198],
  ["jre-6u10-rc-bin-b28...586-21_jul_2008.bin", 263],
  ["jre-6u7-windows-i586-p.exe", 174],
  ["float.tif", 44],
];

function Downloads() {
  return (
    <div className="ml-px flex h-[328px] w-[408px] flex-col rounded-[5px] border border-[#c8c2b8] bg-[#efebe7] font-['DejaVu_Sans'] text-[13px] text-black">
      <div className="flex h-[33px] items-start rounded-t-[5px] bg-linear-to-b from-[#f8f6f3] to-[#efebe7] pl-[5px] pt-[2px]">
        <div className="mt-[2px]"><Firefox s={16} /></div>
        <T w={81} className="ml-[115px] -mt-[1px] font-bold text-[#444]">Downloads</T>
        <div className="ml-[110px] flex gap-[2px]">
          <WinBtn light><path d="M2 9H10" /></WinBtn>
          <WinBtn light><path d="M2 2.500H10V10H2Z" strokeWidth="1.500" /></WinBtn>
          <WinBtn light><path d="M2 2L10 10M10 2L2 10" strokeWidth="2.500" /></WinBtn>
        </div>
      </div>
      <div className="ml-[14px] flex h-[247px] w-[378px] overflow-hidden border-b-2 border-l border-r border-t-2 border-b-white border-l-black border-r-white border-t-[#222] bg-white">
        <div className="w-[361px]">
          {files.map(([f, w], i) => (
            <div key={f} className={"flex h-[71px] justify-between border-b border-dotted pl-[19px] pr-[16px] pt-[13px] " + (i === 0 ? "border-[#6d8fb0] bg-linear-to-b from-[#dbe3ec] to-[#b0c3d4]" : "border-[#b0b0b0]")}>
              <div className="leading-[20px]">
                <T w={w}>{f}</T>
                <T w={34}>Done</T>
              </div>
              <div className="w-[51px] leading-[22px] text-[#0000ee]">
                <T w={34}><u>Open</u></T>
                <T w={51}><u>Remove</u></T>
              </div>
            </div>
          ))}
        </div>
        <div className="flex h-[243px] w-[15px] flex-col border border-[#8a8378] bg-[#c9bfb5]">
          <div className="flex h-[14px] items-center justify-center border-b border-[#8a8378] bg-[#f6f4f1]"><svg width="7" height="4"><path d="M0 4H7L3.500 0Z" fill="#000" /></svg></div>
          <div className="flex h-[35px] items-center justify-center border-b border-[#8a8378] bg-linear-to-r from-white to-[#e4dfd8]"><div className="h-[18px] w-[9px]"><Dots a="#c4bcb0" /></div></div>
          <div className="flex-1" />
          <div className="flex h-[14px] items-center justify-center border-t border-[#8a8378] bg-[#f6f4f1]"><svg width="7" height="4"><path d="M0 0H7L3.500 4Z" fill="#000" /></svg></div>
        </div>
      </div>
      <div className="ml-[298px] mt-[6px] flex h-[31px] w-[94px] items-center rounded-[3px] border border-[#7a7266] bg-linear-to-b from-white to-[#e6e1da] pl-[5px]">
        <svg width="20" height="20" viewBox="0 0 20 20">
          <circle cx="10" cy="10" r="9" fill="#d8303a" stroke="#a01820" />
          <circle cx="10" cy="10" r="4.500" fill="#d8303a" stroke="#fff" strokeWidth="2" />
          <path d="M7 13L13 7" stroke="#fff" strokeWidth="2" />
        </svg>
        <T w={58} className="ml-[5px]"><u>C</u>lean Up</T>
      </div>
    </div>
  );
}

export default function App() {
  return (
    <div className="flex h-[1024px] w-[2560px] items-start overflow-hidden bg-[#424856]">
      <div className="flex h-[1024px] w-[1280px] shrink-0 flex-col bg-[#eeeeee]">
        <TopPanel />
        <div className="flex h-[24px] items-center border-b border-t border-[#7a4a20] bg-linear-to-b from-[#e4a468] via-[#c87f3a] to-[#d8944e] pl-[3px]">
          <Sig />
          <T w={105} className="ml-[542px] font-['DejaVu_Sans'] text-[13px] font-bold text-white [text-shadow:1px_1px_1px_#4a2a08]">gvSIG:Untitled</T>
          <div className="ml-[537px] flex gap-[2px]">
            <WinBtn><path d="M2 9H10" /></WinBtn>
            <WinBtn><path d="M3.500 3.500H8.500V8.500H3.500Z" strokeWidth="1.600" /></WinBtn>
            <WinBtn><path d="M2.500 2.500L9.500 9.500M9.500 2.500L2.500 9.500" strokeWidth="2.400" /></WinBtn>
          </div>
        </div>
        <div className="flex h-[21px] items-center border-b border-[#a8a8a8] bg-linear-to-b from-white to-[#dadada] pl-[7px] font-['Noto_Sans'] text-[12.5px] font-bold text-[#333]">
          {topMenu.map(([t, w, c]) => (
            <div key={t} className={c}><T w={w}>{t}</T></div>
          ))}
        </div>
        <div className="flex h-[26px] w-[1154px] items-center bg-linear-to-b from-white to-[#dadada] pl-[3px]">
          {toolGroups.map((g, i) => (
            <div key={i} className={"flex shrink-0 items-center " + g.w}>
              <div className="mr-[3px] h-[22px] w-[10px] shrink-0"><Dots a="#999" /></div>
              {g.b.map((b) => (
                <div
                  key={b.i}
                  className={
                    "flex h-[22px] shrink-0 items-center justify-center border " +
                    (b.narrow ? "mr-px w-[18px] " : "mr-px w-[21px] ") +
                    (b.gap ? "ml-[10px] " : "") +
                    (b.on ? "border-[#9ab0c6] bg-[#b8cfe5]" : b.off ? "border-[#b0b0b0] bg-[#ececec]" : "border-[#888] bg-[#f4f4f4] shadow-[1px_1px_0_#fff]")
                  }
                >
                  <svg width="18" height="18" viewBox="0 0 18 18" className="shrink-0">{toolIcons[b.i]}</svg>
                </div>
              ))}
            </div>
          ))}
        </div>
        <ViewFrame />
        <StatusBar />
        <Taskbar />
      </div>
      <Downloads />
    </div>
  );
}
